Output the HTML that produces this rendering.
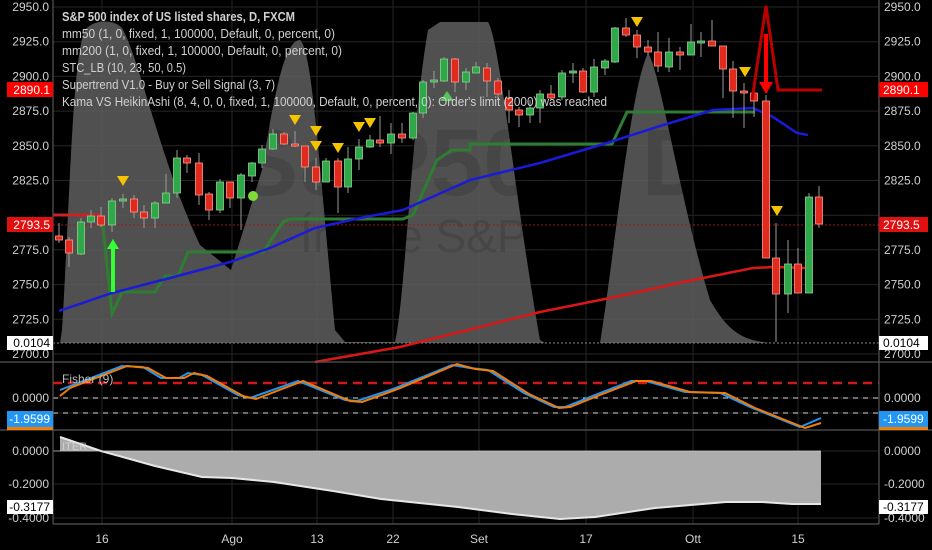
<!DOCTYPE html>
<html><head><meta charset="utf-8"><style>
html,body{margin:0;padding:0;background:#000;}
svg{display:block;font-family:"Liberation Sans",sans-serif;}
</style></head><body>
<svg id="s" width="932" height="550" viewBox="0 0 932 550" xmlns="http://www.w3.org/2000/svg">
<rect width="932" height="550" fill="#000"/>
<g id="grid" stroke="#262626" stroke-width="1"></g>
<!-- STC gray area -->
<path d="M60,343 L62,330 C70,200 72,60 85,30 C95,18 115,20 122,28 C140,60 160,160 200,245 L231,270 L262,170 C275,90 285,40 300,40 C312,50 318,150 335,330 L345,342 L395,342 C405,300 412,120 428,30 L440,22 L488,22 C500,40 515,200 540,340 L545,343 L600,343 C615,250 630,90 648,53 C660,70 680,200 710,300 C730,335 745,340 770,343 Z" fill="#5e5e5e" opacity="0.85"/>
<!-- watermark -->
<text x="235" y="195" font-size="95" font-weight="bold" fill="#000" opacity="0.12">S&amp;P500, D</text>
<text x="300" y="252" font-size="46" fill="#000" opacity="0.12">Índice S&amp;P 500</text>
<!-- horizontal ref lines -->
<line x1="53" y1="225" x2="879" y2="225" stroke="#a01515" stroke-dasharray="2,2"/>
<line x1="53" y1="343" x2="879" y2="343" stroke="#888" stroke-dasharray="2,2"/>
<polyline points="53,215 100,215" stroke="#c22" stroke-width="3" fill="none"/>
<polyline points="102,216 112,314 122,292 155,292 165,276 178,276 188,252 263,252 283,222 290,219 403,219 413,215 437,160 452,150 470,150 470,144 612,144 627,112 755,112" stroke="#2e7d32" stroke-width="3" fill="none"/>
<polyline points="59,311 112,293 170,278 230,262 270,248 315,228 360,218 403,210 430,198 470,180 540,163 607,143 660,126 713,110 753,108 773,117 797,133 808,135" stroke="#1a1ad8" stroke-width="2.5" fill="none"/>
<polyline points="315,362 400,347 460,332 540,312 620,296 693,280 753,268 775,267 805,268" stroke="#d81818" stroke-width="2.5" fill="none"/>
<g id="candles"></g>
<g fill="#f5c400" id="tris"></g>
<polygon points="440,101 447,91 454,101" fill="#57c257"/>
<circle cx="253" cy="196" r="5" fill="#7ddc3a"/>
<line x1="113" y1="292" x2="113" y2="248" stroke="#3f3" stroke-width="4"/>
<polygon points="107,249 113,239 119,249" fill="#3f3"/>
<polyline points="752,100 766,6 778,90 822,90" stroke="#b00" stroke-width="3" fill="none"/>
<line x1="766" y1="34" x2="766" y2="84" stroke="#f00" stroke-width="4"/>
<polygon points="759,82 766,94 773,82" fill="#f00"/>
<!-- legend -->
<g font-size="12.5" fill="#d0d0d0">
<text x="62" y="21" font-weight="bold" textLength="233" lengthAdjust="spacingAndGlyphs">S&amp;P 500 index of US listed shares, D, FXCM</text>
<text x="62" y="38" textLength="273" lengthAdjust="spacingAndGlyphs">mm50 (1, 0, fixed, 1, 100000, Default, 0, percent, 0)</text>
<text x="62" y="55" textLength="280" lengthAdjust="spacingAndGlyphs">mm200 (1, 0, fixed, 1, 100000, Default, 0, percent, 0)</text>
<text x="62" y="72" textLength="124" lengthAdjust="spacingAndGlyphs">STC_LB (10, 23, 50, 0.5)</text>
<text x="62" y="89" textLength="213" lengthAdjust="spacingAndGlyphs">Supertrend V1.0 - Buy or Sell Signal (3, 7)</text>
<text x="62" y="106" textLength="545" lengthAdjust="spacingAndGlyphs">Kama VS HeikinAshi (8, 4, 0, 0, fixed, 1, 100000, Default, 0, percent, 0): Order's limit (2000) was reached</text>
</g>
<!-- Fisher pane -->
<line x1="53" y1="383" x2="879" y2="383" stroke="#d01818" stroke-width="2.5" stroke-dasharray="9,6"/>
<line x1="53" y1="398" x2="879" y2="398" stroke="#ddd" stroke-dasharray="5,5"/>
<line x1="53" y1="413" x2="879" y2="413" stroke="#ddd" stroke-dasharray="5,5"/>
<polyline points="60,390 122,366 143,367 161,378 179,378 188,373 202,375 238,395 250,398 298,381 345,400 357,401 393,389 452,365 470,368 488,370 524,393 554,407 565,407 595,395 631,381 646,381 685,392 720,393 750,407 800,427 821,418" stroke="#2196f3" stroke-width="2" fill="none"/>
<polyline points="60,396 70,388 127,366 148,368 166,378 184,378 194,373 207,376 243,396 256,399 303,381 350,401 362,402 398,389 457,364 475,369 493,371 529,394 559,408 570,407 600,395 636,381 651,381 690,392 725,393 755,408 805,428 821,423" stroke="#f57c00" stroke-width="2" fill="none"/>
<text x="62" y="383" font-size="12" fill="#bbb">Fisher (9)</text>
<!-- bottom pane -->
<path d="M101,451 L155,466 L202,477 L232,478 L274,482 L333,491 L381,499 L458,507 L512,514 L560,519 L595,517 L655,508 L726,502 L762,502 L792,504 L821,504 L821,451 Z" fill="#acacac"/>
<path d="M60,437 L101,451 L60,451 Z" fill="#acacac"/>
<polyline points="60,437 101,451 155,466 202,477 232,478 274,482 333,491 381,499 458,507 512,514 560,519 595,517 655,508 726,502 762,502 792,504 821,504" stroke="#e6e6e6" stroke-width="2" fill="none"/>
<line x1="53" y1="451" x2="821" y2="451" stroke="#ccc" stroke-width="0.8"/>
<text x="62" y="450" font-size="11" fill="#ddd" opacity="0.7">ITER</text>
<g stroke="#555" stroke-width="1.2" fill="none">
<line x1="53" y1="0" x2="53" y2="524"/>
<line x1="879" y1="0" x2="879" y2="524"/>
<line x1="0" y1="362" x2="932" y2="362"/>
<line x1="0" y1="430" x2="932" y2="430"/>
<line x1="53" y1="524" x2="879" y2="524"/>
</g>
<g id="axes" font-size="12" fill="#d0d0d0"></g>
<rect x="7" y="82" width="46" height="15" fill="#f00"/><text x="50" y="94" font-size="12" fill="#fff" text-anchor="end">2890.1</text>
<rect x="879" y="82" width="49" height="15" fill="#f00"/><text x="883" y="94" font-size="12" fill="#fff">2890.1</text>
<rect x="7" y="217" width="46" height="15" fill="#e01010"/><text x="50" y="229" font-size="12" fill="#fff" text-anchor="end">2793.5</text>
<rect x="879" y="217" width="49" height="15" fill="#e01010"/><text x="883" y="229" font-size="12" fill="#fff">2793.5</text>
<rect x="7" y="336" width="46" height="14" fill="#fff"/><text x="50" y="347" font-size="12" fill="#000" text-anchor="end">0.0104</text>
<rect x="879" y="336" width="49" height="14" fill="#fff"/><text x="883" y="347" font-size="12" fill="#000">0.0104</text>
<rect x="7" y="411" width="46" height="16" fill="#2196f3"/><rect x="7" y="427" width="46" height="3" fill="#f57c00"/><text x="50" y="423" font-size="12" fill="#fff" text-anchor="end">-1.9599</text>
<rect x="879" y="411" width="49" height="16" fill="#2196f3"/><rect x="879" y="427" width="49" height="3" fill="#f57c00"/><text x="883" y="423" font-size="12" fill="#fff">-1.9599</text>
<rect x="7" y="500" width="46" height="14" fill="#fff"/><text x="50" y="511" font-size="12" fill="#000" text-anchor="end">-0.3177</text>
<rect x="879" y="500" width="49" height="14" fill="#fff"/><text x="883" y="511" font-size="12" fill="#000">-0.3177</text>
<g font-size="12" fill="#d0d0d0" text-anchor="middle">
<text x="102" y="543">16</text><text x="232" y="543">Ago</text><text x="317" y="543">13</text><text x="393" y="543">22</text>
<text x="479" y="543">Set</text><text x="586" y="543">17</text><text x="693" y="543">Ott</text><text x="798" y="543">15</text>
</g>
</svg>
<script>
var NS="http://www.w3.org/2000/svg";
function el(p,t,a){var e=document.createElementNS(NS,t);for(var k in a)e.setAttribute(k,a[k]);p.appendChild(e);return e;}
var g=document.getElementById('grid');
[102,232,317,393,479,586,693,798].forEach(function(x){el(g,'line',{x1:x,y1:0,x2:x,y2:524});});
var py=function(p){return 7+(2950-p)*1.388;};
for(var p=2950;p>=2700;p-=25){var y=py(p);el(g,'line',{x1:53,y1:y,x2:879,y2:y});}
[398,413,451,484,518].forEach(function(y){el(g,'line',{x1:53,y1:y,x2:879,y2:y});});
var ax=document.getElementById('axes');
for(var p=2950;p>=2700;p-=25){var y=py(p)+4;if(p==2800)continue;
 var t=el(ax,'text',{x:49,y:y,'text-anchor':'end'});t.textContent=p.toFixed(1);
 var t2=el(ax,'text',{x:884,y:y});t2.textContent=p.toFixed(1);}
[[402,'0.0000'],[455,'0.0000'],[488,'-0.2000'],[522,'-0.4000']].forEach(function(a){
 var t=el(ax,'text',{x:49,y:a[0],'text-anchor':'end'});t.textContent=a[1];
 var t2=el(ax,'text',{x:884,y:a[0]});t2.textContent=a[1];});
var C=[[59,236,240,223,243,0],[69,240,253,237,267,0],[81,222,254,218,255,1],[91,216,222,210,228,1],[101,216,225,207,227,0],[112,201,225,198,232,1],[123,199,201,194,208,1],[134,199,212,195,218,0],[144,212,218,205,228,0],[155,203,218,201,228,1],[166,193,203,174,203,1],[177,158,193,150,198,1],[187,158,163,155,173,0],[199,163,195,153,205,0],[209,194,210,192,220,0],[220,182,210,179,213,1],[230,182,198,182,208,0],[241,175,198,173,230,1],[252,163,176,162,182,1],[262,149,163,145,168,1],[273,134,149,129,150,1],[284,134,144,132,145,0],[295,144,146,131,147,0],[305,146,167,146,182,0],[316,167,182,158,190,0],[326,161,182,158,182,1],[338,161,187,158,213,0],[348,159,187,147,193,1],[359,147,159,139,170,1],[370,140,147,135,148,1],[380,140,143,116,147,0],[391,134,143,123,154,1],[402,134,138,123,143,0],[413,113,138,112,140,1],[423,82,113,80,118,1],[434,80,82,71,88,1],[444,59,81,57,82,1],[455,59,82,58,92,0],[466,72,82,68,90,1],[476,67,73,62,73,1],[487,68,81,63,97,0],[498,81,94,78,100,0],[509,98,110,90,123,0],[519,110,115,107,127,0],[530,108,115,100,123,1],[540,94,108,90,123,1],[551,94,98,85,100,0],[562,73,97,70,100,1],[573,71,73,63,83,1],[583,71,92,68,93,0],[594,67,92,59,97,1],[605,61,68,59,75,1],[615,28,62,27,63,1],[626,28,35,18,37,0],[637,35,47,30,58,0],[648,47,52,40,55,0],[658,52,66,32,72,0],[669,52,67,38,72,1],[680,52,55,47,70,0],[691,42,55,24,55,1],[701,41,42,32,57,1],[712,41,46,20,46,0],[723,46,69,46,98,0],[733,69,91,61,118,0],[744,91,92,83,128,0],[754,93,101,83,117,0],[766,101,258,95,258,0],[776,258,294,223,342,0],[788,264,294,240,313,1],[798,264,293,248,293,0],[809,197,293,193,293,1],[819,197,224,186,228,0]];
var cg=document.getElementById('candles');
C.forEach(function(c){el(cg,'line',{x1:c[0],y1:c[3],x2:c[0],y2:c[4],stroke:'#9a9a9a','stroke-width':1});
 el(cg,'rect',{x:c[0]-3.5,y:c[1],width:7,height:Math.max(2,c[2]-c[1]),fill:c[5]?'#2fa84a':'#e02a1e',stroke:c[5]?'#8fd08f':'#ff9a8a','stroke-width':0.8});});
var tg=document.getElementById('tris');
[[123,181],[295,120],[316,131],[316,146],[338,148],[359,127],[370,123],[637,22],[745,72],[777,211]].forEach(function(t){
 el(tg,'polygon',{points:(t[0]-6)+','+(t[1]-5)+' '+(t[0]+6)+','+(t[1]-5)+' '+t[0]+','+(t[1]+5)});});
</script>
</body></html>
